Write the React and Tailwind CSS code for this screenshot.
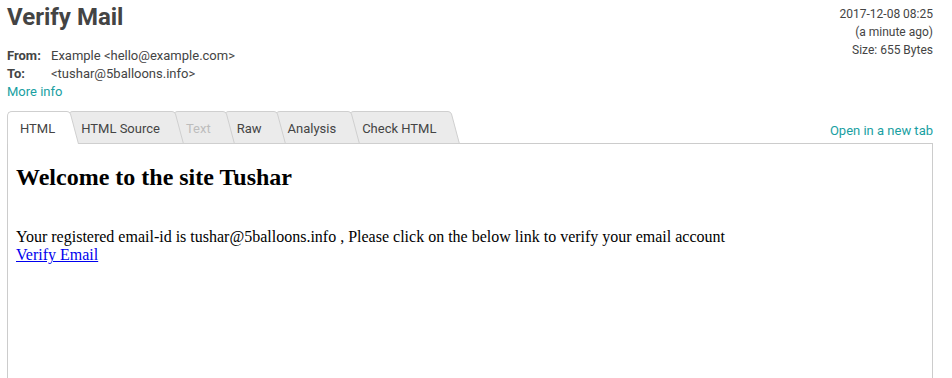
import React from "react";

const tabs = [
  { label: "HTML", active: true, z: "z-[6]" },
  { label: "HTML Source", z: "z-[5]" },
  { label: "Text", disabled: true, z: "z-[4]" },
  { label: "Raw", z: "z-[3]" },
  { label: "Analysis", z: "z-[2]" },
  { label: "Check HTML", z: "z-[1]" },
];

function Tab({ label, active, disabled, z, first }) {
  const bg = active ? "#ffffff" : "#ebebeb";
  return (
    <div className={`relative flex h-[33px] ${z} ${first ? "" : "-ml-[11px]"}`}>
      <div
        className={`flex items-center pl-[12px] pr-[10px] pt-[2px] border-l border-t rounded-tl-[5px] border-[#cfcfcf] text-[13px] ${
          active ? "bg-white border-b-0 pb-px" : "bg-[#ebebeb] border-b"
        } ${disabled ? "text-[#bdbdbd]" : "text-[#444]"}`}
      >
        {label}
      </div>
      <svg width="14" height="33" viewBox="0 0 14 33" className="block shrink-0">
        <path d="M0 0.5 H2 Q4.5 0.5 5.5 3 L13.5 33 H0 Z" fill={bg} />
        <path d="M0 0.5 H2 Q4.5 0.5 5.5 3 L13.5 33" fill="none" stroke="#cfcfcf" strokeWidth="1" />
        {!active && <path d="M0 32.5 H14" stroke="#cfcfcf" strokeWidth="1" />}
      </svg>
    </div>
  );
}

export default function App() {
  return (
    <div className="w-[952px] h-[378px] overflow-hidden bg-white px-[7px] font-['Roboto',sans-serif] text-[#444]">
      <div className="flex justify-between">
        <div>
          <h1 className="pt-[3px] text-[24px] leading-[28px] font-bold text-[#444]">Verify Mail</h1>
          <div className="mt-[16px] text-[13px] leading-[18px]">
            <div className="flex">
              <span className="w-[44px] font-bold">From:</span>
              <span>Example &lt;hello@example.com&gt;</span>
            </div>
            <div className="flex">
              <span className="w-[44px] font-bold">To:</span>
              <span>&lt;tushar@5balloons.info&gt;</span>
            </div>
            <div className="text-[#19a0a2]">More info</div>
          </div>
        </div>
        <div className="pt-[5px] pr-[12px] text-right text-[12px] leading-[18px] text-[#444]">
          <div>2017-12-08 08:25</div>
          <div>(a minute ago)</div>
          <div>Size: 655 Bytes</div>
        </div>
      </div>

      <div className="mt-[10px] relative z-10 -mb-px flex items-end justify-between pr-[12px]">
        <div className="flex">
          {tabs.map((t, i) => (
            <Tab key={t.label} {...t} first={i === 0} />
          ))}
        </div>
        <div className="pb-[4px] text-[13px] text-[#19a0a2]">Open in a new tab</div>
      </div>

      <div className="mr-[12px] h-[300px] border border-[#cccccc] pl-[8px] font-['Liberation_Serif',serif] text-black">
        <h2 className="mt-[19px] text-[24px] leading-[28px] font-bold">Welcome to the site Tushar</h2>
        <p className="mt-[37px] text-[16px] leading-[18px]">
          Your registered email-id is tushar@5balloons.info , Please click on the below link to verify your email account
        </p>
        <div className="text-[16px] leading-[18px]">
          <a href="#" className="text-[#0000ee] underline">
            Verify Email
          </a>
        </div>
      </div>
    </div>
  );
}
